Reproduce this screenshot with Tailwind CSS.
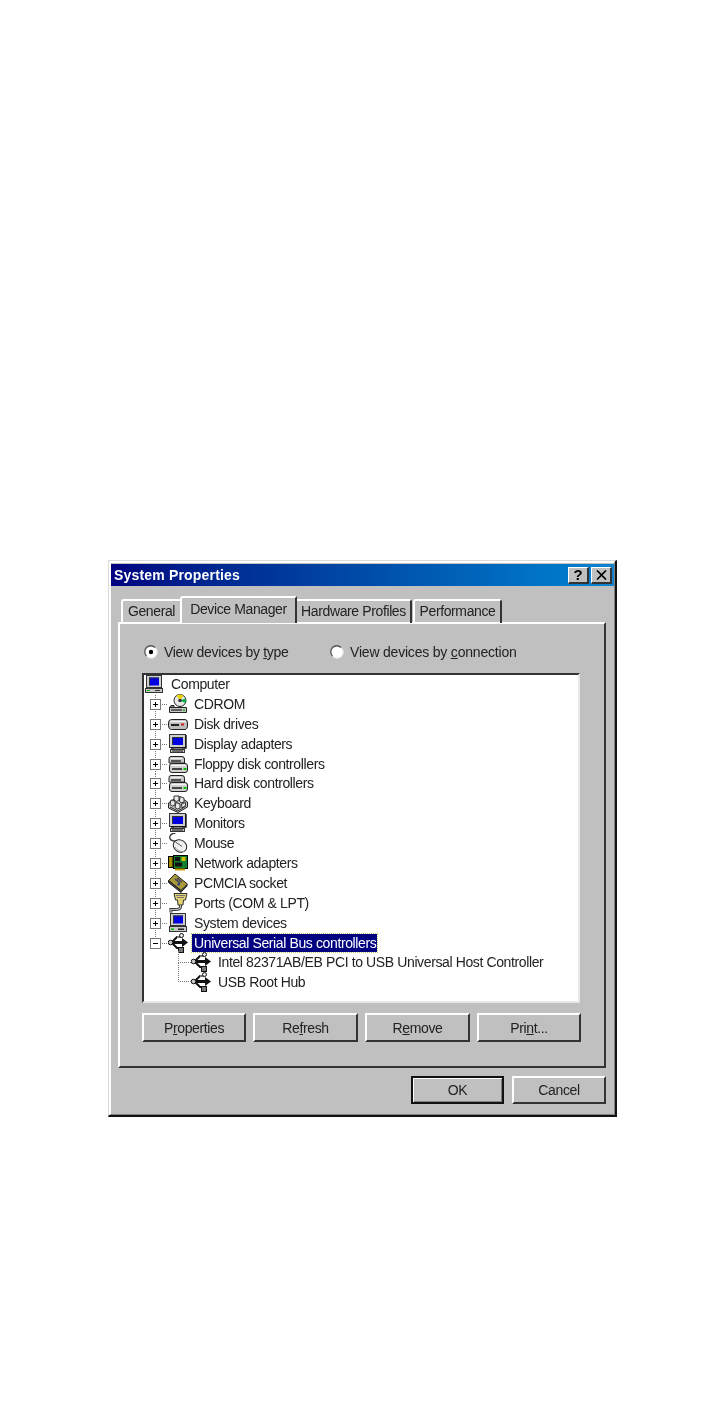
<!DOCTYPE html>
<html lang="en">
<head>
<meta charset="utf-8">
<title>System Properties</title>
<script src="https://cdn.jsdelivr.net/npm/@tailwindcss/browser@4"></script>
</head>
<body class="bg-white">
<svg width="0" height="0" class="absolute">
  <defs>
    <symbol id="plus" viewBox="0 0 24 20"><path d="M11.5 -1V21" stroke="#777" stroke-dasharray="1 1" fill="none"/><path d="M16 10.5H23" stroke="#777" stroke-dasharray="1 1" fill="none"/><rect x="6.5" y="5.5" width="10" height="10" fill="#fff" stroke="#777"/><path d="M9 10.5H14M11.5 8V13" stroke="#000"/></symbol>
    <symbol id="plus-last" viewBox="0 0 24 20"><path d="M11.5 -1V5" stroke="#777" stroke-dasharray="1 1" fill="none"/><path d="M16 10.5H23" stroke="#777" stroke-dasharray="1 1" fill="none"/><rect x="6.5" y="5.5" width="10" height="10" fill="#fff" stroke="#777"/><path d="M9 10.5H14" stroke="#000"/></symbol>
    <symbol id="monitor" viewBox="0 0 20 20"><rect x="1.5" y="0.5" width="16" height="13" fill="#cfcfcf" stroke="#333"/><rect x="4" y="3" width="11" height="8" fill="#0000e0"/><path d="M4 3h11v1H5v7H4z" fill="#333"/><path d="M18 1V14H3" fill="none" stroke="#111" stroke-width="1.4"/><rect x="6" y="14" width="8" height="2" fill="#808080"/><rect x="2.5" y="15.5" width="14" height="3" fill="#c8c8c8" stroke="#333"/><path d="M4 17H15" stroke="#111"/></symbol>
    <symbol id="computer" viewBox="0 0 20 20"><rect x="2.5" y="1.5" width="15" height="12" fill="#cfcfcf" stroke="#333"/><rect x="5" y="3.5" width="10" height="8" fill="#0000e0"/><path d="M5 3.5h10v1H6v7H5z" fill="#333"/><rect x="1.5" y="14.5" width="17" height="4" fill="#c8c8c8" stroke="#333"/><rect x="3" y="16" width="3" height="1" fill="#00c000"/><rect x="11" y="16" width="5" height="1" fill="#333"/></symbol>
    <symbol id="cdrom" viewBox="0 0 20 20"><circle cx="12" cy="6.5" r="6" fill="#e8e8e8" stroke="#222"/><path d="M12 6.5L8.5 1.7A6 6 0 0 1 15.5 1.7Z" fill="#e8d800"/><path d="M12 6.5L17.3 9A6 6 0 0 0 17.6 4.5Z" fill="#00b040"/><circle cx="12" cy="6.5" r="1.8" fill="#333"/><path d="M3 11.5H6V13.5H1.5Z" fill="#888" stroke="#222"/><path d="M1.5 13.5H18.5V18.5H1.5Z" fill="#c8c8c8" stroke="#222"/><path d="M3 16H14" stroke="#333" stroke-width="1.4"/><rect x="15" y="15.5" width="2" height="1.5" fill="#00b000"/></symbol>
    <symbol id="disk" viewBox="0 0 20 20"><path d="M3.5 5.5H17Q19.5 5.5 19.5 9V11Q19.5 15.5 17 15.5H3.5Q0.5 15.5 0.5 11V9Q0.5 5.5 3.5 5.5Z" fill="#bdbdbd" stroke="#222"/><path d="M2 7.5H18" stroke="#f0f0f0" stroke-width="1.4"/><path d="M3 11H11" stroke="#222" stroke-width="2"/><rect x="13" y="9.5" width="3" height="2" fill="#d02020"/></symbol>
    <symbol id="drives" viewBox="0 0 20 20"><path d="M3 2.5H14Q16.5 2.5 16.5 5V9H1V4.5Q1 2.5 3 2.5Z" fill="#c8c8c8" stroke="#222"/><path d="M3 4.5H14" stroke="#f0f0f0"/><path d="M3 7H13" stroke="#222" stroke-width="1.4"/><path d="M4 9.5H17Q19.5 9.5 19.5 12V16Q19.5 18.5 17 18.5H4Q1.5 18.5 1.5 16V12Q1.5 9.5 4 9.5Z" fill="#d0d0d0" stroke="#222"/><path d="M3 11.5H18" stroke="#f4f4f4"/><path d="M4 15H14" stroke="#222" stroke-width="1.6"/><rect x="15.5" y="14" width="3" height="2" fill="#00c000"/></symbol>
    <symbol id="keyboard" viewBox="0 0 20 20"><path d="M0.5 10L10 3L19.5 9V14L10 19.5L0.5 15Z" fill="#c0c0c0" stroke="#222"/><path d="M2 14L10 18M10 18L18 13" stroke="#333" fill="none"/><path d="M6 3H11V7L8.5 8.5L6 7ZM12 3.5L16 5V9L13 10L11.5 8ZM3 7L7 8V12L4.5 13L2 11.5ZM8 9.5L12 11V15L9.5 16L7 14.5ZM13.5 11L17.5 9.5V12.5L14 15Z" fill="#e8e8e8" stroke="#222" stroke-width=".9"/></symbol>
    <symbol id="mouse" viewBox="0 0 20 20"><path d="M9 8.5C3 8 1 6.5 2 3C3 1 6 0 7.5 0" fill="none" stroke="#333" stroke-width="1.3"/><ellipse cx="12" cy="13" rx="7" ry="6" fill="#f0f0f0" stroke="#222" transform="rotate(35 12 13)"/><path d="M7.5 9L14 13.5" stroke="#555"/><path d="M7 14C9 18 14 19.5 17 18" fill="none" stroke="#999"/></symbol>
    <symbol id="network" viewBox="0 0 20 20"><rect x="5.5" y="2.5" width="14" height="13" fill="#108030" stroke="#000"/><rect x="0.5" y="3.5" width="4.5" height="11" fill="#a09000" stroke="#000"/><rect x="7" y="4" width="5" height="4" fill="#111"/><rect x="7" y="9.5" width="7" height="4" fill="#111"/><rect x="13.5" y="4" width="4" height="4" fill="#d0c000"/><rect x="7" y="15.5" width="10" height="2" fill="#c0a000"/></symbol>
    <symbol id="pcmcia" viewBox="0 0 20 20"><path d="M0.5 7.5L7 1L19.5 11L13 17.5Z" fill="#a89a38" stroke="#222"/><path d="M0.5 7.5V9.5L13 19.5V17.5Z" fill="#444" stroke="#222"/><path d="M13 17.5V19.5L19.5 13V11Z" fill="#222"/><path d="M7 6L12 10M9 5L14 9" stroke="#3a3a60" stroke-width="1.5"/><rect x="9.5" y="10" width="2.5" height="2.5" fill="#304080"/></symbol>
    <symbol id="ports" viewBox="0 0 20 20"><path d="M6 0.5H19L17.5 7H15.5L15 12H10L9.5 7H7.5Z" fill="#e0d070" stroke="#333"/><path d="M8 2.5H17M9 4.5H16" stroke="#777"/><path d="M12.5 12V14C12.5 16.5 10 16.5 7 16.5H3V19.5" fill="none" stroke="#333" stroke-width="3"/><path d="M12.5 12V14C12.5 16.5 10 16.5 7 16.5H3V19.5" fill="none" stroke="#bbb" stroke-width="1.2"/></symbol>
    <symbol id="system" viewBox="0 0 20 20"><rect x="2.5" y="0.5" width="15" height="12" fill="#cfcfcf" stroke="#333"/><rect x="5" y="2.5" width="10" height="8" fill="#0000e0"/><path d="M5 2.5h10v1H6v7H5z" fill="#333"/><rect x="1.5" y="13.5" width="17" height="5" fill="#c8c8c8" stroke="#333"/><rect x="3" y="15.5" width="3" height="1.5" fill="#00c000"/><rect x="10" y="15.5" width="6" height="1.5" fill="#222"/></symbol>
    <symbol id="usb" viewBox="0 0 20 20"><path d="M2 9.5H16" stroke="#111" stroke-width="3"/><path d="M14 5L20 9.5L14 14Z" fill="#111"/><path d="M4 9L9 4H13M4 10L9 15H11" fill="none" stroke="#111" stroke-width="2"/><path d="M9 4H14" stroke="#ddd" stroke-width="1"/><rect x="11.5" y="0.5" width="4" height="4" rx="2" fill="#e8e8e8" stroke="#111"/><rect x="10.5" y="14.5" width="5" height="5" fill="#777" stroke="#111"/><circle cx="2.5" cy="9.5" r="2.3" fill="#c8c8c8" stroke="#111"/></symbol>
  </defs>
</svg>

<main class="pt-[560px] pl-[108px] font-['Liberation_Sans',Arial,sans-serif] text-[14px] tracking-[-0.38px] text-[#222] leading-none blur-[0.35px]">
  <div class="w-[509px] h-[557px] border-t border-l border-t-[#dcdcdc] border-l-[#dcdcdc] border-r-2 border-b-2 border-r-[#111] border-b-[#111] bg-[#c0c0c0]">
    <div class="h-full border-t-2 border-l-2 border-r border-b border-t-white border-l-white border-r-[#808080] border-b-[#808080] pt-px flex flex-col">

      <div class="h-[22px] bg-linear-to-r from-[#000080] to-[#1084d0] flex items-center justify-between pl-[3px] pr-[2px]">
        <span class="font-bold text-white text-[14px] tracking-[0.18px]">System Properties</span>
        <div class="flex gap-[2px]">
          <button class="w-[21px] h-[17px] bg-[#c0c0c0] border-t border-l border-t-white border-l-white border-r-2 border-b-2 border-r-[#333] border-b-[#333] flex items-center justify-center font-bold text-[15px] tracking-normal text-black">?</button>
          <button class="w-[21px] h-[17px] bg-[#c0c0c0] border-t border-l border-t-white border-l-white border-r-2 border-b-2 border-r-[#333] border-b-[#333] flex items-center justify-center">
            <svg width="11" height="10" viewBox="0 0 11 10"><path d="M1 0.5L10 9.5M10 0.5L1 9.5" stroke="#000" stroke-width="1.7"/></svg>
          </button>
        </div>
      </div>

      <div class="ml-[7px] mt-[10px] w-[488px]">
        <div class="flex items-end h-[27px] pl-[3px] relative z-10 -mb-px">
          <div class="w-[60px] h-[24px] border-t-2 border-l-2 border-r border-t-white border-l-white border-r-[#999] rounded-tl-[3px] flex items-center justify-center pb-[2px]">General</div>
          <div class="w-[117px] h-[27px] -ml-px border-t-2 border-l-2 border-r-2 border-t-white border-l-white border-r-[#333] rounded-tl-[3px] bg-[#c0c0c0] flex items-center justify-center pb-[3px]">Device Manager</div>
          <div class="w-[115px] h-[24px] border-t-2 border-r-2 border-t-white border-r-[#333] rounded-tr-[3px] flex items-center justify-center pb-[2px]">Hardware Profiles</div>
          <div class="w-[89px] h-[24px] ml-px border-t-2 border-l-2 border-r-2 border-t-white border-l-white border-r-[#333] rounded-t-[3px] flex items-center justify-center pb-[2px]">Performance</div>
        </div>

        <section class="h-[446px] border-t-2 border-l-2 border-t-white border-l-white border-r-2 border-b-2 border-r-[#333] border-b-[#333] pl-[22px] pr-[23px]">
          <div class="h-[49px] flex items-end pb-[14px]">
            <label class="flex items-center w-[188px] tracking-[-0.3px]">
              <svg class="w-[14px] h-[14px] mr-[6px] ml-[2px]" viewBox="0 0 14 14"><circle cx="7" cy="7" r="6" fill="#fff"/><path d="M2.5 11A6 6 0 0 1 11 2.5" fill="none" stroke="#555" stroke-width="1.3"/><path d="M3 11.5A6 6 0 0 0 11.5 3" fill="none" stroke="#eee"/><circle cx="7" cy="7" r="2.2" fill="#000"/></svg>
              <span>View devices by <u>t</u>ype</span>
            </label>
            <label class="flex items-center tracking-[-0.2px]">
              <svg class="w-[14px] h-[14px] mr-[6px]" viewBox="0 0 14 14"><circle cx="7" cy="7" r="6" fill="#fff"/><path d="M2.5 11A6 6 0 0 1 11 2.5" fill="none" stroke="#555" stroke-width="1.3"/><path d="M3 11.5A6 6 0 0 0 11.5 3" fill="none" stroke="#eee"/></svg>
              <span>View devices by <u>c</u>onnection</span>
            </label>
          </div>

          <div class="w-[438px] h-[330px] bg-white border-t-2 border-l-2 border-t-[#333] border-l-[#333] border-r-2 border-b-2 border-r-[#e8e8e8] border-b-[#e8e8e8]">
            <div class="flex items-center h-[18.9px]"><svg class="w-[20px] h-[20px] shrink-0"><use href="#computer"/></svg><span class="ml-[7px]">Computer</span></div>
            <div class="flex items-center h-[19.9px]"><svg class="w-[24px] h-[20px] shrink-0"><use href="#plus"/></svg><svg class="w-[20px] h-[20px] shrink-0"><use href="#cdrom"/></svg><span class="ml-[6px]">CDROM</span></div>
            <div class="flex items-center h-[19.9px]"><svg class="w-[24px] h-[20px] shrink-0"><use href="#plus"/></svg><svg class="w-[20px] h-[20px] shrink-0"><use href="#disk"/></svg><span class="ml-[6px]">Disk drives</span></div>
            <div class="flex items-center h-[19.9px]"><svg class="w-[24px] h-[20px] shrink-0"><use href="#plus"/></svg><svg class="w-[20px] h-[20px] shrink-0"><use href="#monitor"/></svg><span class="ml-[6px]">Display adapters</span></div>
            <div class="flex items-center h-[19.9px]"><svg class="w-[24px] h-[20px] shrink-0"><use href="#plus"/></svg><svg class="w-[20px] h-[20px] shrink-0"><use href="#drives"/></svg><span class="ml-[6px]">Floppy disk controllers</span></div>
            <div class="flex items-center h-[19.9px]"><svg class="w-[24px] h-[20px] shrink-0"><use href="#plus"/></svg><svg class="w-[20px] h-[20px] shrink-0"><use href="#drives"/></svg><span class="ml-[6px]">Hard disk controllers</span></div>
            <div class="flex items-center h-[19.9px]"><svg class="w-[24px] h-[20px] shrink-0"><use href="#plus"/></svg><svg class="w-[20px] h-[20px] shrink-0"><use href="#keyboard"/></svg><span class="ml-[6px]">Keyboard</span></div>
            <div class="flex items-center h-[19.9px]"><svg class="w-[24px] h-[20px] shrink-0"><use href="#plus"/></svg><svg class="w-[20px] h-[20px] shrink-0"><use href="#monitor"/></svg><span class="ml-[6px]">Monitors</span></div>
            <div class="flex items-center h-[19.9px]"><svg class="w-[24px] h-[20px] shrink-0"><use href="#plus"/></svg><svg class="w-[20px] h-[20px] shrink-0"><use href="#mouse"/></svg><span class="ml-[6px]">Mouse</span></div>
            <div class="flex items-center h-[19.9px]"><svg class="w-[24px] h-[20px] shrink-0"><use href="#plus"/></svg><svg class="w-[20px] h-[20px] shrink-0"><use href="#network"/></svg><span class="ml-[6px]">Network adapters</span></div>
            <div class="flex items-center h-[19.9px]"><svg class="w-[24px] h-[20px] shrink-0"><use href="#plus"/></svg><svg class="w-[20px] h-[20px] shrink-0"><use href="#pcmcia"/></svg><span class="ml-[6px]">PCMCIA socket</span></div>
            <div class="flex items-center h-[19.9px]"><svg class="w-[24px] h-[20px] shrink-0"><use href="#plus"/></svg><svg class="w-[20px] h-[20px] shrink-0"><use href="#ports"/></svg><span class="ml-[6px]">Ports (COM &amp; LPT)</span></div>
            <div class="flex items-center h-[19.9px]"><svg class="w-[24px] h-[20px] shrink-0"><use href="#plus"/></svg><svg class="w-[20px] h-[20px] shrink-0"><use href="#system"/></svg><span class="ml-[6px]">System devices</span></div>
            <div class="flex items-center h-[19.9px]"><svg class="w-[24px] h-[20px] shrink-0"><use href="#plus-last"/></svg><svg class="w-[20px] h-[20px] shrink-0"><use href="#usb"/></svg><span class="ml-[4px] pl-[2px] pr-px h-[18px] flex items-center bg-[#000080] text-white outline-1 outline-dotted outline-[#c8c860]">Universal Serial Bus controllers</span></div>
            <div class="flex items-center h-[19.9px] pl-[34px]"><span class="w-[13px] h-[12px] -mt-[10px] border-l border-b border-dotted border-[#777]"></span><svg class="w-[20px] h-[20px] shrink-0"><use href="#usb"/></svg><span class="ml-[7px]">Intel 82371AB/EB PCI to USB Universal Host Controller</span></div>
            <div class="flex items-center h-[19.9px] pl-[34px]"><span class="w-[13px] h-[20px] -mt-[20px] border-l border-b border-dotted border-[#777]"></span><svg class="w-[20px] h-[20px] shrink-0"><use href="#usb"/></svg><span class="ml-[7px]">USB Root Hub</span></div>
          </div>

          <div class="flex gap-[7px] mt-[10px]">
            <button class="w-[104px] h-[29px] shrink-0 border-t-2 border-l-2 border-t-white border-l-white border-r-2 border-b-2 border-r-[#333] border-b-[#333] flex items-center justify-center"><span>P<u>r</u>operties</span></button>
            <button class="w-[105px] h-[29px] shrink-0 border-t-2 border-l-2 border-t-white border-l-white border-r-2 border-b-2 border-r-[#333] border-b-[#333] flex items-center justify-center"><span>Re<u>f</u>resh</span></button>
            <button class="w-[105px] h-[29px] shrink-0 border-t-2 border-l-2 border-t-white border-l-white border-r-2 border-b-2 border-r-[#333] border-b-[#333] flex items-center justify-center"><span>R<u>e</u>move</span></button>
            <button class="w-[104px] h-[29px] shrink-0 border-t-2 border-l-2 border-t-white border-l-white border-r-2 border-b-2 border-r-[#333] border-b-[#333] flex items-center justify-center"><span>Pri<u>n</u>t...</span></button>
          </div>
        </section>

        <div class="flex justify-end gap-[8px] mt-[8px]">
          <button class="w-[93px] h-[28px] border-2 border-[#111] flex items-center justify-center shadow-[inset_1px_1px_0_#fff,inset_-1px_-1px_0_#808080]">OK</button>
          <button class="w-[94px] h-[28px] border-t-2 border-l-2 border-t-white border-l-white border-r-2 border-b-2 border-r-[#333] border-b-[#333] flex items-center justify-center">Cancel</button>
        </div>
      </div>
    </div>
  </div>
</main>
</body>
</html>
